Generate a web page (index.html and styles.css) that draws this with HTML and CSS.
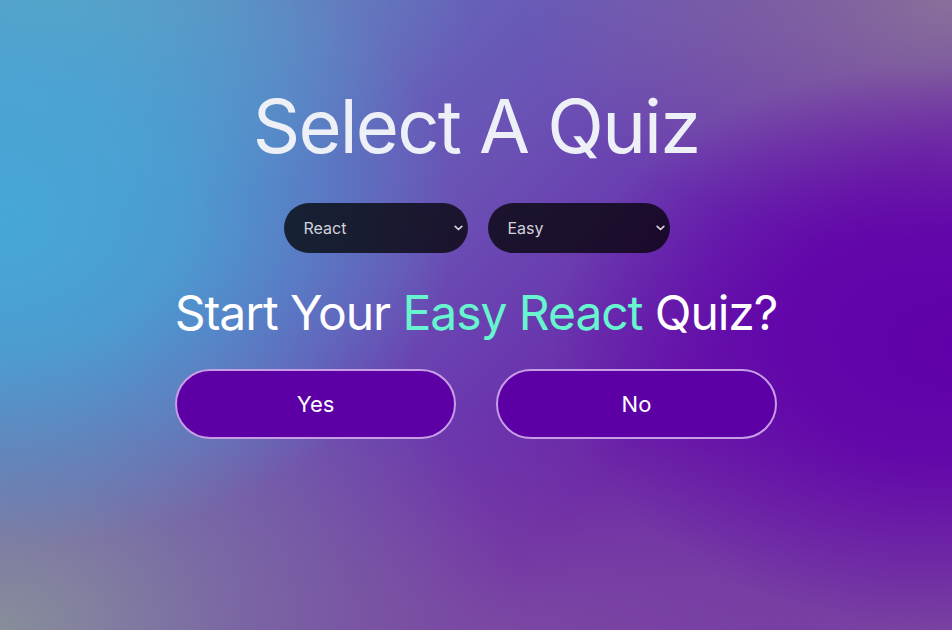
FILE: index.html
```html
<!DOCTYPE html>
<html lang="en">
<head>
<meta charset="utf-8">
<title>Select A Quiz</title>
<link rel="stylesheet" href="styles.css">
</head>
<body>
<main class="page">
  <h1 class="title">Select A Quiz</h1>
  <div class="selects">
    <label class="select-wrap">
      <select class="select">
        <option>React</option>
        <option>JavaScript</option>
      </select>
      <svg class="chevron" width="9" height="6" viewBox="0 0 9 6"><path d="M1.2 1.3 L4.5 4.5 L7.8 1.3" fill="none" stroke="#d4d4dc" stroke-width="1.7" stroke-linecap="round" stroke-linejoin="round"/></svg>
    </label>
    <label class="select-wrap">
      <select class="select">
        <option>Easy</option>
        <option>Hard</option>
      </select>
      <svg class="chevron" width="9" height="6" viewBox="0 0 9 6"><path d="M1.2 1.3 L4.5 4.5 L7.8 1.3" fill="none" stroke="#d4d4dc" stroke-width="1.7" stroke-linecap="round" stroke-linejoin="round"/></svg>
    </label>
  </div>
  <h2 class="question">Start Your <span class="accent">Easy React</span> Quiz?</h2>
  <div class="actions">
    <button class="btn">Yes</button>
    <button class="btn">No</button>
  </div>
</main>
</body>
</html>
```

FILE: styles.css
```css
html, body {
  margin: 0;
  padding: 0;
  height: 100%;
}
body {
  font-family: Inter, "Liberation Sans", sans-serif;
  color: #fff;
  background-color: #7338a4;
  background-image:
    radial-gradient(ellipse 42% 45% at 100% 55%, #6000aa 0%, rgba(96,0,170,0.85) 40%, rgba(96,0,170,0) 100%),
    radial-gradient(ellipse 48% 52% at 0% 35%, #46a8d6 0%, rgba(70,168,214,0.8) 40%, rgba(70,168,214,0) 100%),
    radial-gradient(ellipse 55% 55% at 0% 100%, #888e9a 0%, rgba(128,128,160,0.6) 45%, rgba(128,128,160,0) 100%),
    radial-gradient(ellipse 60% 35% at 55% 100%, rgba(124,74,162,0.9) 0%, rgba(124,74,162,0) 100%),
    radial-gradient(ellipse 45% 40% at 100% 0%, #88709a 0%, rgba(136,112,154,0) 100%),
    radial-gradient(ellipse 45% 35% at 5% 0%, #5ea2c4 0%, rgba(94,162,196,0) 100%),
    linear-gradient(135deg, #5e86c4 0%, #6a50b4 42%, #6a20a8 68%, #7840a0 100%);
  overflow: hidden;
}
.page {
  display: flex;
  flex-direction: column;
  align-items: center;
  padding-top: 82px;
}
.title {
  margin: 0;
  font-size: 74px;
  font-weight: 400;
  line-height: 88px;
  color: #eef0f8;
  letter-spacing: -1.8px;
}
.selects {
  display: flex;
  gap: 20px;
  margin-top: 33px;
}
.select-wrap {
  position: relative;
  display: block;
}
.select {
  appearance: none;
  -webkit-appearance: none;
  width: 184px;
  height: 50px;
  border: none;
  border-radius: 25px;
  background: rgba(0, 0, 0, 0.74);
  color: #d2d2da;
  font-family: Inter, "Liberation Sans", sans-serif;
  font-size: 16px;
  padding: 0 20px;
  outline: none;
}
.select-wrap:first-child {
  margin-left: 1px;
}
.select-wrap:last-child .select {
  width: 182px;
}
.chevron {
  position: absolute;
  right: 5px;
  top: 22px;
  pointer-events: none;
}
.question {
  margin: 32px 0 0;
  font-size: 48px;
  font-weight: 400;
  line-height: 56px;
  letter-spacing: -1.05px;
}
.accent {
  color: #66f5cf;
}
.actions {
  display: flex;
  gap: 40px;
  margin-top: 28px;
}
.btn {
  box-sizing: border-box;
  width: 281px;
  height: 70px;
  border-radius: 35px;
  border: 2px solid #c79de6;
  background: #5c00a6;
  color: #fff;
  font-family: Inter, "Liberation Sans", sans-serif;
  font-size: 22px;
}
```
